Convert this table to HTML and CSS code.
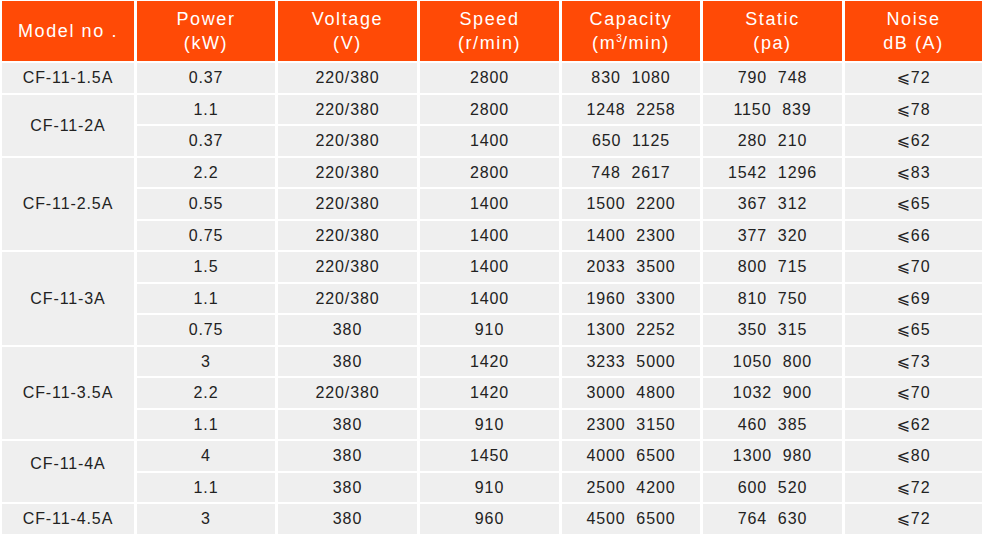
FILE: index.html
```html
<!DOCTYPE html>
<html lang="en">
<head>
<meta charset="utf-8">
<title>CF-11 Fan Specifications</title>
<link rel="stylesheet" href="styles.css">
</head>
<body>
<table class="spec">
  <colgroup>
    <col class="c-model"><col class="c-power"><col class="c-volt"><col class="c-speed"><col class="c-cap"><col class="c-static"><col class="c-noise">
  </colgroup>
  <thead>
    <tr>
      <th>Model no .</th>
      <th>Power<br>(kW)</th>
      <th>Voltage<br>(V)</th>
      <th>Speed<br>(r/min)</th>
      <th>Capacity<br>(m<sup>3</sup>/min)</th>
      <th>Static<br>(pa)</th>
      <th>Noise<br>dB (A)</th>
    </tr>
  </thead>
  <tbody>
    <tr><td>CF-11-1.5A</td><td>0.37</td><td>220/380</td><td>2800</td><td>830&nbsp; 1080</td><td>790&nbsp; 748</td><td>⩽72</td></tr>

    <tr><td rowspan="2">CF-11-2A</td><td>1.1</td><td>220/380</td><td>2800</td><td>1248&nbsp; 2258</td><td>1150&nbsp; 839</td><td>⩽78</td></tr>
    <tr><td>0.37</td><td>220/380</td><td>1400</td><td>650&nbsp; 1125</td><td>280&nbsp; 210</td><td>⩽62</td></tr>

    <tr><td rowspan="3">CF-11-2.5A</td><td>2.2</td><td>220/380</td><td>2800</td><td>748&nbsp; 2617</td><td>1542&nbsp; 1296</td><td>⩽83</td></tr>
    <tr><td>0.55</td><td>220/380</td><td>1400</td><td>1500&nbsp; 2200</td><td>367&nbsp; 312</td><td>⩽65</td></tr>
    <tr><td>0.75</td><td>220/380</td><td>1400</td><td>1400&nbsp; 2300</td><td>377&nbsp; 320</td><td>⩽66</td></tr>

    <tr><td rowspan="3">CF-11-3A</td><td>1.5</td><td>220/380</td><td>1400</td><td>2033&nbsp; 3500</td><td>800&nbsp; 715</td><td>⩽70</td></tr>
    <tr><td>1.1</td><td>220/380</td><td>1400</td><td>1960&nbsp; 3300</td><td>810&nbsp; 750</td><td>⩽69</td></tr>
    <tr><td>0.75</td><td>380</td><td>910</td><td>1300&nbsp; 2252</td><td>350&nbsp; 315</td><td>⩽65</td></tr>

    <tr><td rowspan="3">CF-11-3.5A</td><td>3</td><td>380</td><td>1420</td><td>3233&nbsp; 5000</td><td>1050&nbsp; 800</td><td>⩽73</td></tr>
    <tr><td>2.2</td><td>220/380</td><td>1420</td><td>3000&nbsp; 4800</td><td>1032&nbsp; 900</td><td>⩽70</td></tr>
    <tr><td>1.1</td><td>380</td><td>910</td><td>2300&nbsp; 3150</td><td>460&nbsp; 385</td><td>⩽62</td></tr>

    <tr><td rowspan="2" class="raised">CF-11-4A</td><td>4</td><td>380</td><td>1450</td><td>4000&nbsp; 6500</td><td>1300&nbsp; 980</td><td>⩽80</td></tr>
    <tr><td>1.1</td><td>380</td><td>910</td><td>2500&nbsp; 4200</td><td>600&nbsp; 520</td><td>⩽72</td></tr>

    <tr><td>CF-11-4.5A</td><td>3</td><td>380</td><td>960</td><td>4500&nbsp; 6500</td><td>764&nbsp; 630</td><td>⩽72</td></tr>
  </tbody>
</table>
</body>
</html>
```

FILE: styles.css
```css
html, body {
  margin: 0;
  padding: 0;
  background: #ffffff;
}

.spec {
  margin: -1px 0 0 -1px;
  border-collapse: separate;
  border-spacing: 3px 2px;
  table-layout: fixed;
  font-family: "Liberation Sans", Arial, "DejaVu Sans", sans-serif;
}

.c-model { width: 132px; }
.c-power { width: 138px; }
.c-volt { width: 139px; }
.c-speed { width: 139px; }
.c-cap { width: 138px; }
.c-static { width: 139px; }
.c-noise { width: 137px; }

.spec th {
  height: 60px;
  padding: 0;
  background: #ff4a06;
  color: #ffffff;
  font-weight: normal;
  font-size: 18px;
  line-height: 24px;
  letter-spacing: 1.6px;
  text-align: center;
  vertical-align: middle;
}

.spec th sup {
  font-size: 10px;
  line-height: 0;
  vertical-align: 7px;
  letter-spacing: 0;
}

.spec td {
  height: 29.5px;
  padding: 1px 0 0;
  box-sizing: border-box;
  background: #efefef;
  color: #222222;
  font-size: 16px;
  line-height: 20px;
  letter-spacing: 0.9px;
  text-align: center;
  vertical-align: middle;
  white-space: nowrap;
}

.spec td.raised {
  padding-bottom: 17px;
}
```
